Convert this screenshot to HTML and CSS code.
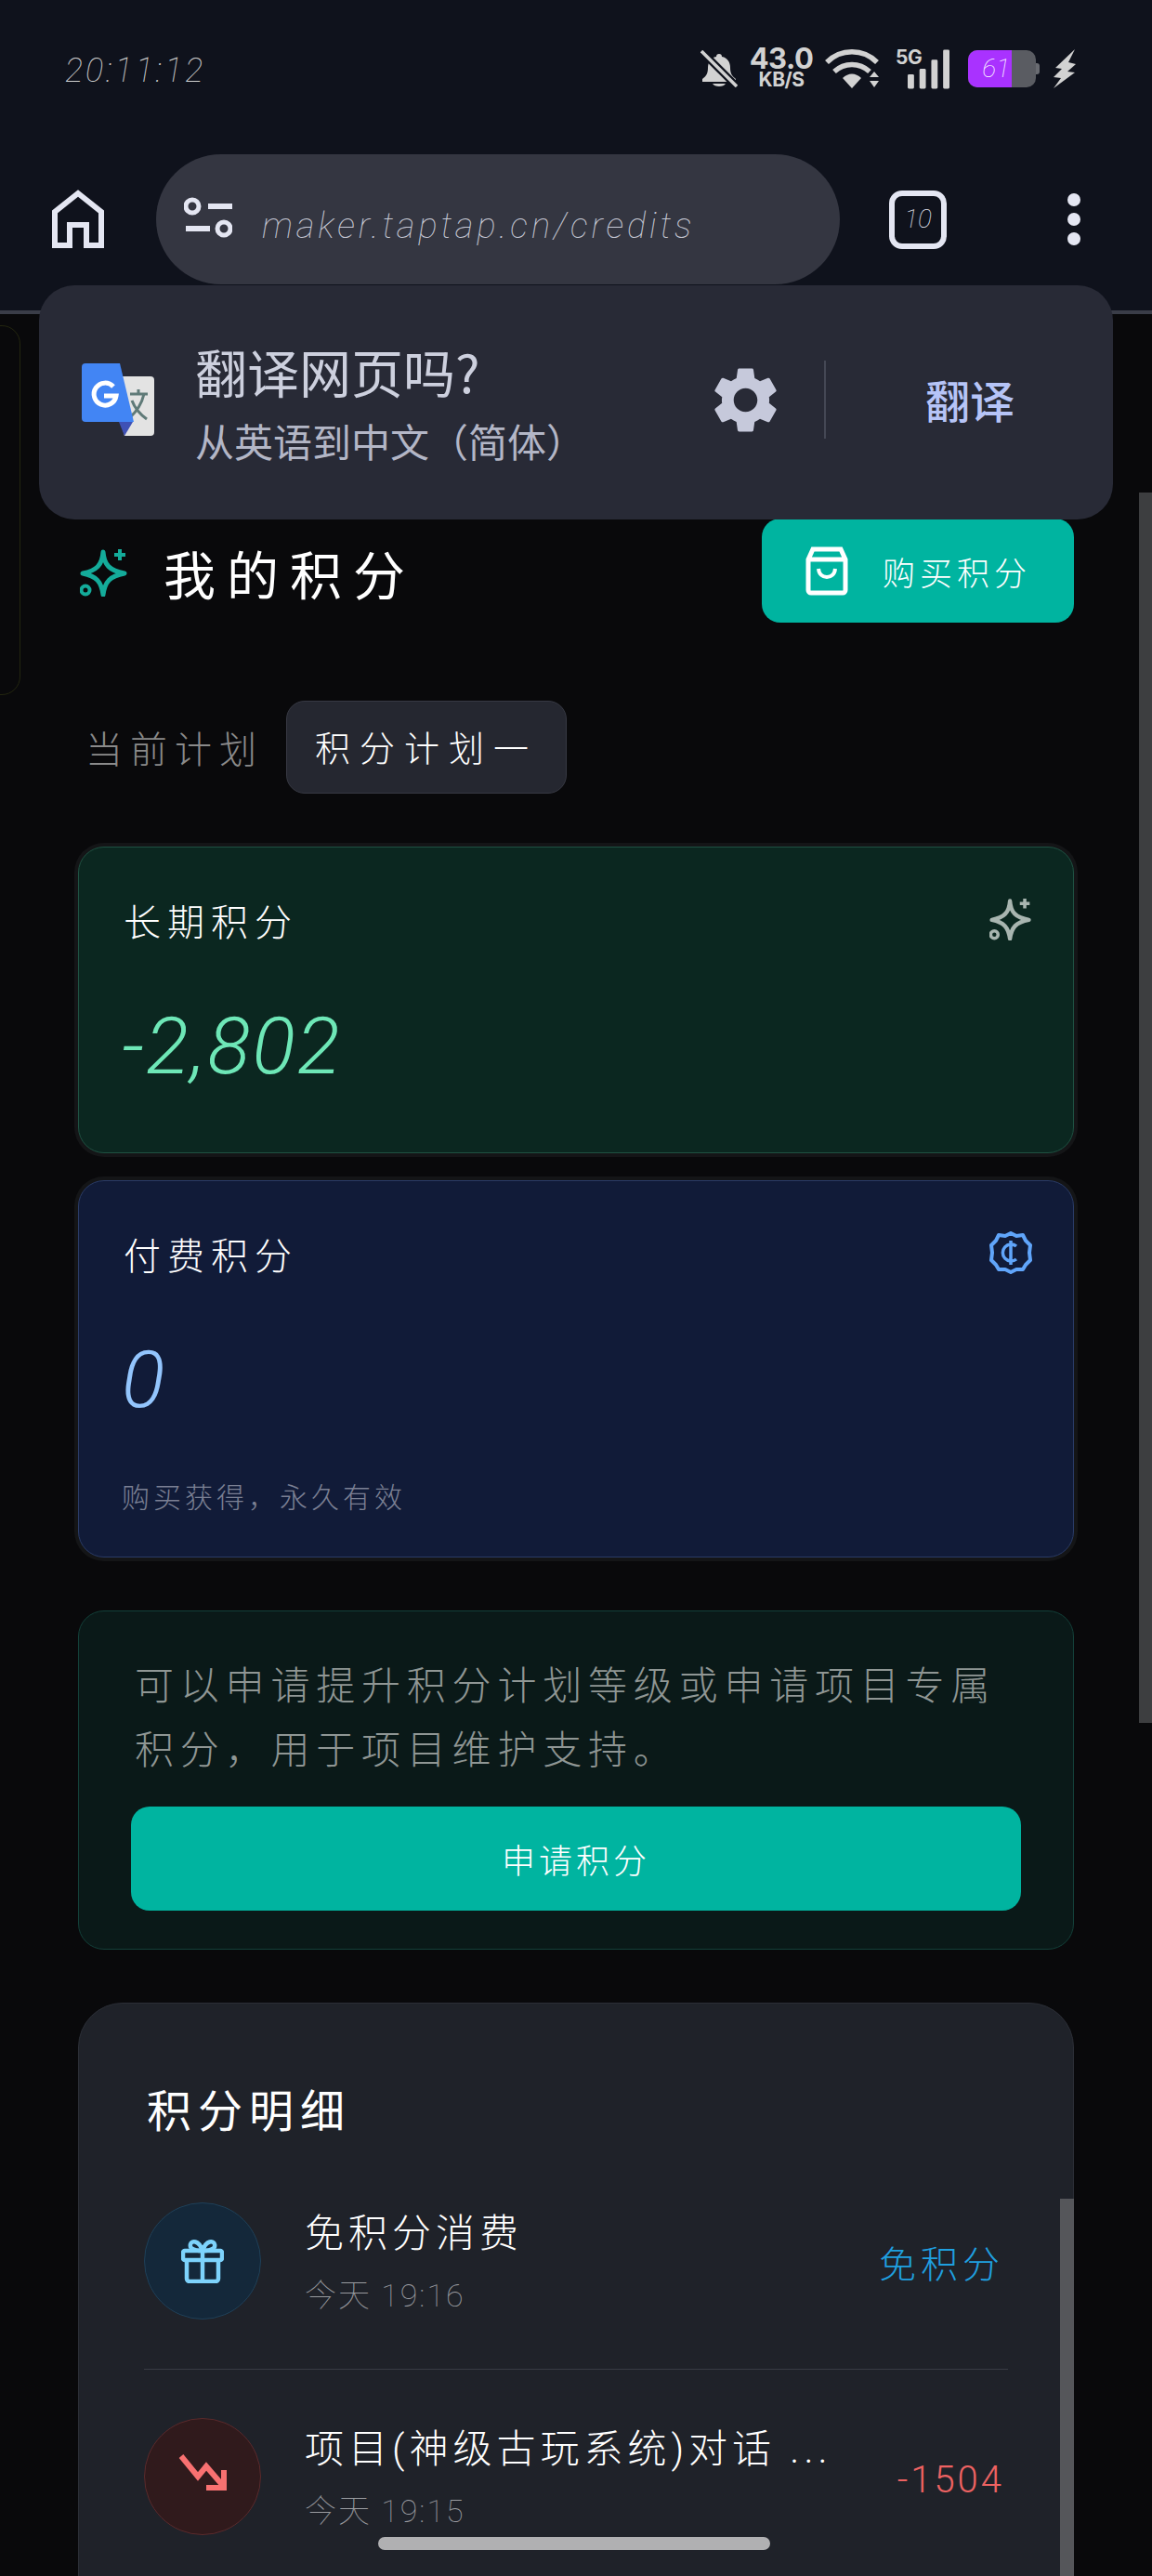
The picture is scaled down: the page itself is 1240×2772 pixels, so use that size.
FILE: index.html
```html
<!DOCTYPE html>
<html lang="zh">
<head>
<meta charset="utf-8">
<title>我的积分</title>
<link rel="stylesheet" href="styles.css">
</head>
<body>

<header class="chrome">
    <div class="status">
        <span class="clock">20:11:12</span>
        <div class="status-icons">
            <svg class="ic-bell" viewBox="0 0 40 40"><path d="M20 4c2 0 3 1 3 3 6 1 9 6 9 12 0 6 2 9 6 12v3H2v-3c4-3 6-6 6-12 0-6 3-11 9-12 0-2 1-3 3-3z" fill="#d2d2d2"/><path d="M13 36h14c-2 4-12 4-14 0z" fill="#d2d2d2"/><path d="M1 1l38 38" stroke="#0f121c" stroke-width="8"/><path d="M1 1l38 38" stroke="#d2d2d2" stroke-width="3.5"/></svg>
            <div class="speed"><b>43.0</b><span>KB/S</span></div>
            <svg class="ic-wifi" viewBox="0 0 60 44"><g fill="none" stroke="#d2d2d2" stroke-width="5.5"><path d="M2 15c15-15 39-15 54 0"/><path d="M10 25c11-10 27-10 38 0"/></g><path d="M19 32c6-6 14-6 20 0l-10 11z" fill="#d2d2d2"/><path d="M48 31l5-6 5 6zM48 35l5 7 5-7z" fill="#d2d2d2"/></svg>
            <div class="signal">
                <span class="five-g">5G</span>
                <svg class="ic-bars" viewBox="0 0 46 43"><g fill="#d2d2d2"><rect x="0" y="27" width="7" height="16" rx="1.5"/><rect x="13" y="21" width="7" height="22" rx="1.5"/><rect x="26" y="11" width="7" height="32" rx="1.5"/><rect x="39" y="0" width="7" height="43" rx="1.5"/></g></svg>
            </div>
            <div class="battery"><span class="battery-fill">61</span></div>
            <svg class="ic-bolt" viewBox="0 0 25 42"><path d="M24 0L3 20l7 1-9 9 8 1-8 11 23-17-8-1 9-8-8-2z" fill="#d2d2d2"/></svg>
        </div>
    </div>
    <div class="toolbar">
        <svg class="ic-home" viewBox="0 0 56 63"><path d="M3 60V24L28 4l25 20v36H37V38H19v22z" fill="none" stroke="#e4e6f2" stroke-width="6"/></svg>
        <div class="address">
            <svg class="ic-tune" viewBox="0 0 52 44"><g fill="none" stroke="#e4e6f2" stroke-width="5"><circle cx="9" cy="10" r="7"/><circle cx="43" cy="34" r="7"/></g><rect x="26" y="7" width="26" height="6" fill="#e4e6f2"/><rect y="31" x="2" width="26" height="6" fill="#e4e6f2"/></svg>
            <span class="url">maker.taptap.cn/credits</span>
        </div>
        <div class="tabs">10</div>
        <div class="menu-dots"><i></i><i></i><i></i></div>
    </div>
</header>

<div class="ghost-card"></div>

<div class="translate-bar">
    <svg class="ic-gtrans" viewBox="0 0 78 78"><path d="M30 14h44a4 4 0 0 1 4 4v56a4 4 0 0 1-4 4H46z" fill="#e3e3e3"/><path d="M52 33h19M61 28v5M67 33c-3 13-9 20-16 26M54 40c3 8 9 15 16 20" fill="none" stroke="#5f7a78" stroke-width="3"/><path d="M40 63h15L46 78z" fill="#3f51b5"/><path d="M4 0h37l15 63H4a4 4 0 0 1-4-4V4a4 4 0 0 1 4-4z" fill="#4285f4"/><path d="M34 25a12 12 0 1 0 3 10H24" fill="none" stroke="#fff" stroke-width="5"/></svg>
    <div class="translate-text">
        <div class="translate-title">翻译网页吗?</div>
        <div class="translate-sub">从英语到中文（简体）</div>
    </div>
    <svg class="ic-gear" viewBox="2.4 2 19.2 20"><path fill="#c6c9db" d="M19.14 12.94c.04-.3.06-.61.06-.94 0-.32-.02-.64-.07-.94l2.03-1.58a.49.49 0 0 0 .12-.61l-1.92-3.32a.488.488 0 0 0-.59-.22l-2.39.96c-.5-.38-1.03-.7-1.62-.94l-.36-2.54a.484.484 0 0 0-.48-.41h-3.84c-.24 0-.43.17-.47.41l-.36 2.54c-.59.24-1.13.57-1.62.94l-2.39-.96c-.22-.08-.47 0-.59.22L2.74 8.87c-.12.21-.08.47.12.61l2.03 1.58c-.05.3-.09.63-.09.94s.02.64.07.94l-2.03 1.58a.49.49 0 0 0-.12.61l1.92 3.32c.12.22.37.29.59.22l2.39-.96c.5.38 1.03.7 1.62.94l.36 2.54c.05.24.24.41.48.41h3.84c.24 0 .44-.17.47-.41l.36-2.54c.59-.24 1.13-.56 1.62-.94l2.39.96c.22.08.47 0 .59-.22l1.92-3.32c.12-.22.07-.47-.12-.61l-2.01-1.58zM12 15.6c-1.98 0-3.6-1.62-3.6-3.6s1.62-3.6 3.6-3.6 3.6 1.62 3.6 3.6-1.62 3.6-3.6 3.6z"/></svg>
    <div class="translate-divider"></div>
    <div class="translate-action">翻译</div>
</div>

<main class="content">
    <div class="page-head">
        <div class="page-title">
            <svg class="ic-spark spark-teal" viewBox="0 0 52 52"><use href="#spark"/></svg>
            <h1>我的积分</h1>
        </div>
        <button class="btn-buy">
            <svg class="ic-bag" viewBox="0 0 46 53"><path d="M8 3h30l5 11v33a3 3 0 0 1-3 3H6a3 3 0 0 1-3-3V14zM3 14h40" fill="none" stroke="#fff" stroke-width="5"/><path d="M14 24c1 12 17 12 18 0" fill="none" stroke="#fff" stroke-width="4"/></svg>
            购买积分
        </button>
    </div>

    <div class="plan-row">
        <span class="plan-label">当前计划</span>
        <span class="plan-chip">积分计划一</span>
    </div>

    <section class="card card-green">
        <div class="card-head">
            <span class="card-title">长期积分</span>
            <svg class="ic-spark spark-grey" viewBox="0 0 52 52"><use href="#spark"/></svg>
        </div>
        <div class="card-num num-green">-2,802</div>
    </section>

    <section class="card card-blue">
        <div class="card-head">
            <span class="card-title">付费积分</span>
            <svg class="ic-coin" viewBox="0 0 46 46"><path d="M23 2l6 3 7-1 3 6 5 5-1 8 1 8-5 5-3 5-7 0-6 3-6-3-7 0-3-5-5-5 1-8-1-8 5-5 3-6 7 1z" fill="none" stroke="#60a5fa" stroke-width="4" stroke-linejoin="round"/><path d="M29 16a9 9 0 1 0 0 14M23 10v26" fill="none" stroke="#60a5fa" stroke-width="3.5"/></svg>
        </div>
        <div class="card-num num-blue">0</div>
        <div class="card-note">购买获得，永久有效</div>
    </section>

    <section class="apply-box">
        <p>可以申请提升积分计划等级或申请项目专属积分，用于项目维护支持。</p>
        <button class="btn-apply">申请积分</button>
    </section>

    <section class="ledger">
        <h2>积分明细</h2>
        <div class="ledger-row">
            <div class="round-ic round-blue">
                <svg class="ic-gift" viewBox="0 0 46 48"><g fill="none" stroke="#7dd3fc" stroke-width="4.5"><rect x="2" y="13" width="42" height="10" rx="2"/><path d="M6 23v20a3 3 0 0 0 3 3h28a3 3 0 0 0 3-3V23M23 13v33"/><path d="M23 13c-12 0-14-4-13-7 1-4 9-5 13 7zM23 13c12 0 14-4 13-7-1-4-9-5-13 7z"/></g></svg>
            </div>
            <div class="ledger-text">
                <div class="ledger-name">免积分消费</div>
                <div class="ledger-time">今天 19:16</div>
            </div>
            <div class="ledger-val val-free">免积分</div>
        </div>
        <div class="ledger-row row-sep">
            <div class="round-ic round-red">
                <svg class="ic-trend" viewBox="0 0 52 40"><path d="M3 3l18 22 9-11 19 22M49 18v19H30" fill="none" stroke="#f87171" stroke-width="6"/></svg>
            </div>
            <div class="ledger-text">
                <div class="ledger-name">项目(神级古玩系统)对话 ...</div>
                <div class="ledger-time">今天 19:15</div>
            </div>
            <div class="ledger-val val-minus">-1504</div>
        </div>
        <div class="ledger-scroll"></div>
    </section>
</main>

<div class="page-scroll"></div>
<div class="home-bar"></div>

<svg class="defs" width="0" height="0"><defs><g id="spark" fill="none" stroke="currentColor" stroke-width="5"><path d="M25 4C26 18 32 24 48 27 32 30 27 36 25 50 23 36 18 30 3 27 18 24 24 18 25 4z" stroke-linejoin="round"/><path d="M43 1v12M37 7h12" stroke-width="4"/><circle cx="6" cy="45" r="4.5" stroke-width="4"/></g></defs></svg>

</body>
</html>
```

FILE: styles.css
```css
* {box-sizing: border-box;}
html, body {margin: 0; padding: 0;}
body {
    width: 1240px;
    height: 2772px;
    overflow: hidden;
    position: relative;
    background: #09090b;
    color: #fff;
    font-family: Roboto, "Noto Sans CJK SC", sans-serif;
    font-weight: 300;
}
h1, h2, p {margin: 0; font-weight: 300;}
button {border: 0; font: inherit; color: #fff; background: #00b4a0;}
.defs {position: absolute;}

/* browser chrome */
.chrome {
    height: 338px;
    background: #0f121c;
    border-bottom: 4px solid #3a3d48;
}
.status {
    height: 166px;
    padding: 52px 82px 0 70px;
    display: flex;
    justify-content: space-between;
    align-items: flex-start;
}
.clock {font-size: 36px; font-weight: 100; font-style: italic; letter-spacing: 3px; color: #d0d0d0; line-height: 48px;}
.status-icons {display: flex; align-items: center; height: 44px; gap: 12px;}
.ic-bell {width: 40px; height: 40px;}
.speed {display: flex; flex-direction: column; align-items: center; font-family: Inter, sans-serif; color: #d2d2d2; width: 70px; margin-top: -3px;}
.speed b {font-size: 31px; font-weight: 700; line-height: 25px; letter-spacing: -.5px;}
.speed span {font-size: 21px; font-weight: 700; line-height: 18px; letter-spacing: -.5px; margin-top: 2px;}
.ic-wifi {width: 60px; height: 44px;}
.signal {position: relative; width: 58px; height: 44px; margin-left: 4px;}
.five-g {position: absolute; left: 0; top: 0; font: 700 21px/20px Inter, sans-serif; color: #d2d2d2; letter-spacing: -.5px;}
.ic-bars {position: absolute; right: 0; top: 1px; width: 45px; height: 43px;}
.battery {
    position: relative;
    width: 73px;
    height: 40px;
    margin-left: 8px;
    margin-right: 4px;
    background: #5a5c62;
    border-radius: 10px;
    flex: none;
}
.battery::after {content: ""; position: absolute; right: -4px; top: 14px; width: 4px; height: 12px; background: #6a6c72; border-radius: 0 3px 3px 0;}
.battery-fill {
    display: block;
    width: 47px;
    height: 40px;
    background: #a932ff;
    border-radius: 10px 0 0 10px;
    font: italic 100 28px/40px Roboto, sans-serif;
    color: #fff;
    text-align: right;
    padding-right: 2px;
}
.ic-bolt {width: 25px; height: 42px; margin-left: 2px;}

.toolbar {
    height: 140px;
    padding: 0 76px 0 56px;
    display: flex;
    align-items: center;
}
.ic-home {width: 56px; height: 63px; margin-top: -2px;}
.address {
    width: 736px;
    height: 140px;
    margin-left: 56px;
    background: #343641;
    border-radius: 70px;
    display: flex;
    align-items: center;
    padding-left: 30px;
}
.ic-tune {width: 52px; height: 44px; margin-top: -4px;}
.url {
    margin-left: 32px;
    margin-top: 14px;
    font-size: 38px;
    font-weight: 100;
    letter-spacing: 3.9px;
    color: #c8cad6;
    font-style: italic;
}
.tabs {
    width: 62px;
    height: 63px;
    margin-left: 53px;
    border: 6px solid #e4e6f2;
    border-radius: 14px;
    font-size: 28px;
    font-weight: 100;
    font-style: italic;
    line-height: 50px;
    text-align: center;
    color: #e4e6f2;
}
.menu-dots {margin-left: 130px; display: flex; flex-direction: column; gap: 7px;}
.menu-dots i {display: block; width: 14px; height: 14px; border-radius: 50%; background: #e4e6f2;}

.ghost-card {
    position: absolute;
    left: -30px;
    top: 350px;
    width: 52px;
    height: 398px;
    border: 1px solid #23260f;
    border-radius: 20px;
}

/* translate prompt */
.translate-bar {
    position: absolute;
    left: 42px;
    top: 307px;
    width: 1156px;
    height: 252px;
    background: #282a36;
    border-radius: 38px;
    display: flex;
    align-items: center;
    padding-left: 46px;
    font-family: "Noto Sans CJK SC", sans-serif;
    font-weight: 400;
}
.ic-gtrans {width: 78px; height: 78px; flex: none; margin-top: -6px;}
.translate-text {margin-left: 44px; width: 557px; margin-top: 3px;}
.translate-title {font-size: 56px; line-height: 70px; color: #cdd0de;}
.translate-sub {font-size: 42px; line-height: 62px; color: #b3b6c6; margin-top: 9px;}
.ic-gear {width: 71px; height: 71px; flex: none; margin-top: -6px;}
.translate-divider {width: 2px; height: 84px; background: #454855; margin-left: 49px; margin-top: -6px;}
.translate-action {font-size: 48px; font-weight: 500; color: #b6c4f7; margin-left: 107px; margin-top: -8px;}

/* page */
.content {padding: 220px 84px 0;}
.page-head {display: flex; justify-content: space-between; align-items: center; height: 112px;}
.page-title {display: flex; align-items: center; padding-left: 2px;}
.page-title h1 {font-size: 56px; letter-spacing: 12px; margin-left: 38px; margin-top: 14px; line-height: 76px; font-weight: 400;}
.ic-spark {width: 52px; height: 52px; flex: none;}
.spark-teal {color: #14ab9a; margin-top: 3px;}
.spark-grey {color: #a8b5b0; width: 46px; height: 46px;}
.btn-buy {
    width: 336px;
    height: 112px;
    border-radius: 20px;
    display: flex;
    align-items: center;
    padding-left: 47px;
    font-size: 35px;
    letter-spacing: 5px;
}
.ic-bag {width: 46px; height: 53px; margin-right: 37px;}

.plan-row {display: flex; align-items: center; margin-top: 84px; height: 100px; padding-left: 8px;}
.plan-label {font-size: 40px; letter-spacing: 8px; color: #8a8a8a; width: 216px;}
.plan-chip {
    width: 302px;
    height: 100px;
    background: #252730;
    border: 1px solid #373943;
    border-radius: 20px;
    font-size: 38px;
    letter-spacing: 10px;
    line-height: 102px;
    text-align: center;
}

.card {
    margin-top: 29px;
    border-radius: 28px;
    border: 1px solid;
    padding: 54px 44px 0 48px;
    box-shadow: 0 0 0 4px #141517;
}
.card-green {margin-top: 57px; height: 330px; background: #0b2720; border-color: #1f5142;}
.card-blue {height: 406px; background: #111b38; border-color: #2a3b66;}
.card-head {display: flex; justify-content: space-between; align-items: flex-start; height: 56px;}
.card-title {font-size: 40px; letter-spacing: 7px; line-height: 56px;}
.card-num {font-size: 86px; line-height: 84px; margin-top: 62px; margin-left: -2px; font-weight: 100; font-style: italic; letter-spacing: 2px;}
.num-green {color: #6ee7b7; font-weight: 300;}
.num-blue {color: #93c5fd; font-weight: 300;}
.card-note {font-size: 30px; letter-spacing: 4px; color: #7b8094; margin-top: 60px; margin-left: -2px;}
.ic-coin {width: 46px; height: 46px;}

.apply-box {
    margin-top: 57px;
    height: 365px;
    background: #0a1918;
    border: 1px solid #134039;
    border-radius: 28px;
    padding: 46px 56px 0;
}
.apply-box p {font-size: 42px; letter-spacing: 6.8px; line-height: 69px; color: #8f9694; margin-left: 4px; margin-right: -4px;}
.btn-apply {
    display: block;
    width: 958px;
    height: 112px;
    margin-top: 26px;
    border-radius: 20px;
    font-size: 36px;
    letter-spacing: 4px;
    text-align: center;
}

.ledger {
    position: relative;
    margin-top: 57px;
    height: 700px;
    background: #1f2229;
    border: 1px solid #2b2e36;
    border-radius: 48px;
    padding: 82px 70px 0;
}
.ledger h2 {font-size: 48px; letter-spacing: 7px; line-height: 70px; margin-left: 3px; font-weight: 400;}
.ledger-row {display: flex; align-items: center; height: 126px; margin-top: 62px;}
.row-sep {position: relative; margin-top: 106px;}
.row-sep::before {content: ""; position: absolute; left: 0; right: 0; top: -53px; height: 1px; background: #383b44;}
.round-ic {width: 126px; height: 126px; border-radius: 50%; border: 1px solid; display: flex; align-items: center; justify-content: center; flex: none;}
.round-blue {background: #14283a; border-color: #1f4058;}
.round-red {background: #301a1c; border-color: #5a2a2c;}
.ic-gift {width: 46px; height: 48px;}
.ic-trend {width: 52px; height: 40px; margin-top: -10px;}
.ledger-text {margin-left: 47px; flex: 1;}
.ledger-name {font-size: 42px; letter-spacing: 5px; line-height: 60px; margin-top: 3px;}
.ledger-time {font-size: 34px; font-weight: 100; color: #9a9ca0; line-height: 50px; margin-top: 11px; letter-spacing: 2px;}
.ledger-val {font-size: 40px; letter-spacing: 5px; margin-right: 4px; margin-top: 2px;}
.val-free {color: #1fa0e0;}
.val-minus {color: #ee6262; font-weight: 300; letter-spacing: 3px; font-size: 40px; margin-right: 4px; margin-top: 6px;}
.ledger-scroll {position: absolute; right: -1px; top: 210px; width: 15px; height: 500px; background: #55565a;}

.page-scroll {position: absolute; left: 1226px; top: 530px; width: 14px; height: 1324px; background: #3d3e40;}
.home-bar {position: absolute; left: 407px; top: 2730px; width: 422px; height: 14px; border-radius: 7px; background: #b0b0b2;}
```
